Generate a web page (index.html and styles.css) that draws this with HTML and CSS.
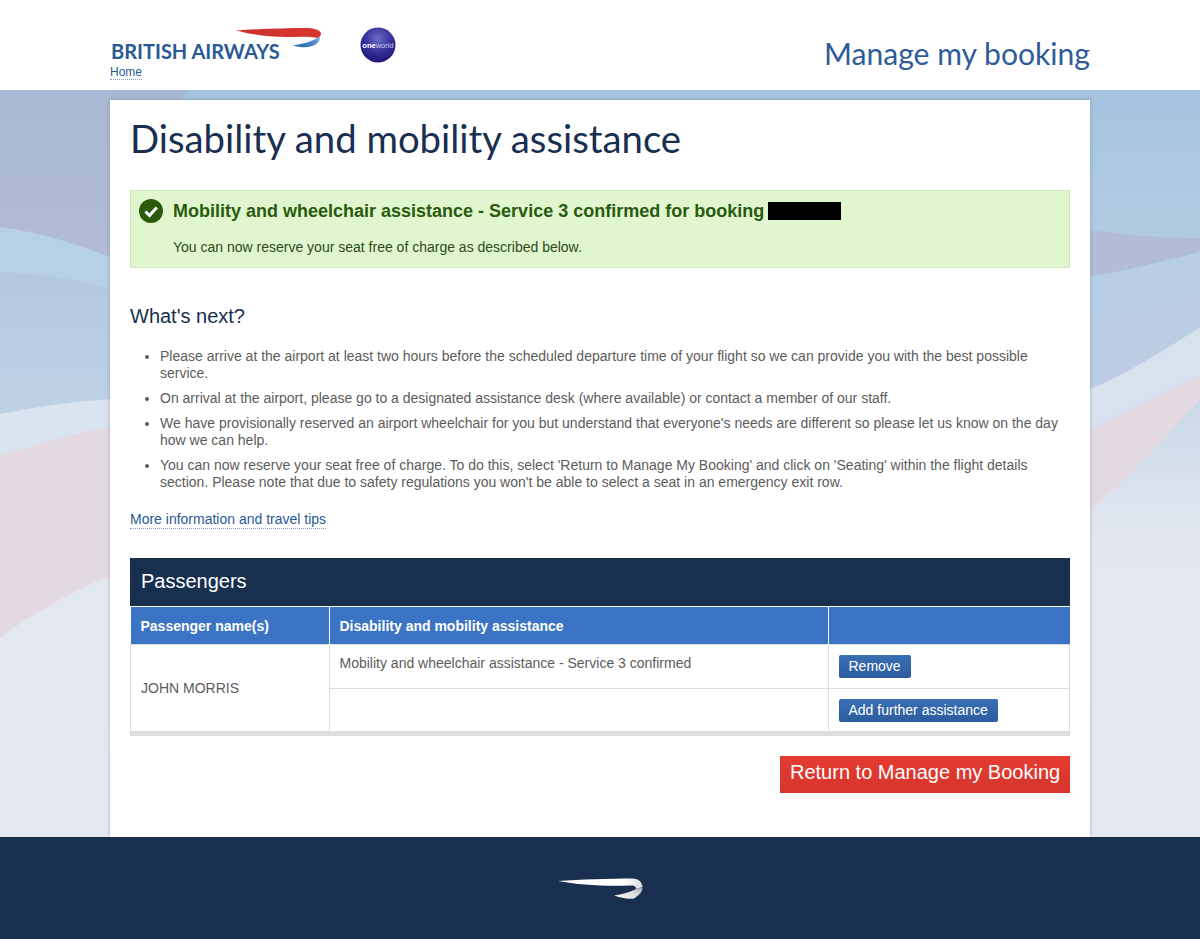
FILE: index.html

```html
<!DOCTYPE html>
<html lang="en">
<head>
  <meta charset="UTF-8" />
  <meta name="viewport" content="width=device-width, initial-scale=1.0"/>
  <title>Disability and mobility assistance</title>
  <link rel="stylesheet" href="styles.css">
</head>
<body>
  <header class="site-header">
    <div class="brand">
      <svg class="ba-logo" width="212" height="36" viewBox="110 26 212 36">
        <defs>
          <linearGradient id="baBlue" x1="0" y1="1" x2="1" y2="0">
            <stop offset="0" stop-color="#1f5fa8"/>
            <stop offset="0.75" stop-color="#5f97d6"/>
            <stop offset="1" stop-color="#a9c6e6"/>
          </linearGradient>
          <linearGradient id="baRed" x1="0" y1="0" x2="1" y2="0">
            <stop offset="0" stop-color="#c9322c"/>
            <stop offset="1" stop-color="#d8382e"/>
          </linearGradient>
        </defs>
        <path d="M236 30.5C258 29 284 28 305 28C314 28 320 30 321 33C321 35 320 37 318 38C309 36 298 37 286 37C268 37 250 34 236 30.5Z" fill="url(#baRed)"/>
        <path d="M293 45.5C303 44 313 41 320 36.5C320.500 40 318 44 312 46C306 48 300 47.500 293 45.5Z" fill="url(#baBlue)"/>
        <text class="ba-word" x="111" y="59">BRITISH AIRWAYS</text>
      </svg>
      <a class="home-link" href="#">Home</a>
    </div>
    <svg class="oneworld" width="36" height="36" viewBox="0 0 36 36">
      <defs>
        <radialGradient id="globe" cx="0.5" cy="0.32" r="0.72">
          <stop offset="0" stop-color="#6a6bc4"/>
          <stop offset="0.55" stop-color="#35309a"/>
          <stop offset="1" stop-color="#1b1470"/>
        </radialGradient>
      </defs>
      <circle cx="18" cy="18" r="17.500" fill="url(#globe)"/>
      <text class="oneworld-text" x="18" y="20.500"><tspan class="oneworld-one">one</tspan>world</text>
    </svg>
    <div class="section-name">Manage my booking</div>
  </header>

  <main class="page-bg">
    <svg class="swooshes" width="1200" height="747" viewBox="0 90 1200 747" preserveAspectRatio="none">
      <defs>
        <linearGradient id="midBlue" x1="0" y1="0" x2="0" y2="1">
          <stop offset="0" stop-color="#b3c8e0"/>
          <stop offset="1" stop-color="#c5d6e7"/>
        </linearGradient>
        <linearGradient id="topPurple" x1="0" y1="0" x2="0" y2="1">
          <stop offset="0" stop-color="#a9b8d2"/>
          <stop offset="1" stop-color="#b3bdd4"/>
        </linearGradient>
      </defs>
      <path d="M0 90H190L180 100C230 130 300 200 340 290H0Z" fill="url(#topPurple)"/>
      <!-- left side bands -->
      <path d="M0 227C40 232 80 245 110 257L300 340V500H0Z" fill="#b6d0e6"/>
      <path d="M0 272C40 273 80 280 110 289L300 340V500H0Z" fill="url(#midBlue)"/>
      <path d="M0 414C40 406 80 401 110 399H300V500H0Z" fill="#d8e4ef"/>
      <path d="M0 456C40 443 80 432 110 427H300V560L110 576C70 592 30 615 0 638Z" fill="#e2d9e1"/>
      <!-- right side bands -->
      <path d="M900 222C960 225 1030 228 1090 230C1130 236 1170 238 1200 238V252C1160 262 1125 272 1090 276H900Z" fill="#b0bdd5"/>
      <path d="M900 276H1090C1125 272 1160 262 1200 252V291C1160 303 1125 314 1090 320H900Z" fill="#b7cee6"/>
      <path d="M900 320H1090C1125 314 1160 303 1200 291V327C1165 350 1125 375 1090 389H900Z" fill="#bacde3"/>
      <path d="M900 389H1090C1125 375 1165 350 1200 327V376C1160 392 1125 415 1090 430H900Z" fill="#d6e2ed"/>
      <path d="M900 430H1090C1125 415 1160 392 1200 376V400C1165 435 1130 480 1090 509H900Z" fill="#e2d9e1"/>
    </svg>

    <section class="card">
      <h1>Disability and mobility assistance</h1>

      <div class="alert">
        <div class="alert-title">
          <svg class="tick" width="24" height="24" viewBox="0 0 24 24">
            <circle cx="12" cy="12" r="12" fill="#2a5a0c"/>
            <path d="M6.500 12.500L10.500 16.500L17.800 8.500" fill="none" stroke="#fff" stroke-width="3"/>
          </svg>
          <span>Mobility and wheelchair assistance - Service 3 confirmed for booking</span>
          <span class="redacted"></span>
        </div>
        <p>You can now reserve your seat free of charge as described below.</p>
      </div>

      <h2>What's next?</h2>
      <ul class="next-list">
        <li>Please arrive at the airport at least two hours before the scheduled departure time of your flight so we can provide you with the best possible service.</li>
        <li>On arrival at the airport, please go to a designated assistance desk (where available) or contact a member of our staff.</li>
        <li>We have provisionally reserved an airport wheelchair for you but understand that everyone's needs are different so please let us know on the day how we can help.</li>
        <li>You can now reserve your seat free of charge. To do this, select 'Return to Manage My Booking' and click on 'Seating' within the flight details section. Please note that due to safety regulations you won't be able to select a seat in an emergency exit row.</li>
      </ul>

      <a class="more-link" href="#">More information and travel tips</a>

      <div class="table-title">Passengers</div>
      <table class="pax-table">
        <thead>
          <tr>
            <th class="col-name">Passenger name(s)</th>
            <th class="col-assist">Disability and mobility assistance</th>
            <th></th>
          </tr>
        </thead>
        <tbody>
          <tr>
            <td rowspan="2" class="pax-name">JOHN MORRIS</td>
            <td class="assist-text">Mobility and wheelchair assistance - Service 3 confirmed</td>
            <td><a class="btn-small" href="#">Remove</a></td>
          </tr>
          <tr>
            <td></td>
            <td class="add-cell"><a class="btn-small" href="#">Add further assistance</a></td>
          </tr>
        </tbody>
      </table>

      <div class="actions">
        <a class="btn-return" href="#">Return to Manage my Booking</a>
      </div>
    </section>
  </main>

  <footer class="site-footer">
    <svg width="86" height="22" viewBox="558 878 86 22">
      <defs>
        <linearGradient id="footSwoosh" x1="0" y1="0" x2="1" y2="0">
          <stop offset="0" stop-color="#fff"/>
          <stop offset="0.8" stop-color="#fff"/>
          <stop offset="1" stop-color="#d5d8dc"/>
        </linearGradient>
        <linearGradient id="footCurl" x1="0" y1="1" x2="1" y2="0">
          <stop offset="0" stop-color="#fff"/>
          <stop offset="0.6" stop-color="#d8dadd"/>
          <stop offset="1" stop-color="#9fa6b0"/>
        </linearGradient>
      </defs>
      <path d="M558 881C580 879.500 610 878.500 632 878.500C639 878.500 642 882 642.500 887L636 889C636 886 634 885.500 630 885.500C606 886.500 578 885 558 881Z" fill="url(#footSwoosh)"/>
      <path d="M614 895.500C622 894.500 630 892 636 889L642.500 887C643 892 638 896 634 898.500C628 899.500 620 897.500 614 895.500Z" fill="url(#footCurl)"/>
    </svg>
  </footer>
</body>
</html>
```

FILE: styles.css

```css
body {
  margin: 0;
  font-family: 'Liberation Sans', Arial, sans-serif;
  font-size: 14px;
  color: #5c5c5c;
  background: #fff;
}
a {
  color: #2a5a96;
  text-decoration: none;
}

/* header */
.site-header {
  width: 980px;
  height: 90px;
  margin: 0 auto;
  display: flex;
  align-items: flex-start;
}
.brand {
  width: 250px;
  padding-top: 26px;
}
.ba-logo {
  display: block;
}
.ba-word {
  font-family: 'Lato', sans-serif;
  font-size: 20px;
  font-weight: 700;
  fill: #2a5a96;
}
.home-link {
  display: inline-block;
  font-size: 12px;
  line-height: 14px;
  margin-top: 3px;
  border-bottom: 1px dotted #7f9cc0;
}
.oneworld {
  margin-top: 27px;
}
.oneworld-text {
  font-family: 'Liberation Sans', sans-serif;
  font-size: 7.500px;
  text-anchor: middle;
  fill: #c9c9ec;
}
.oneworld-one {
  fill: #fff;
  font-weight: 700;
}
.section-name {
  margin-left: auto;
  margin-top: 35px;
  font-family: 'Lato', sans-serif;
  font-size: 30.100px;
  line-height: 36px;
  color: #2e5c99;
}

/* background */
.page-bg {
  position: relative;
  height: 747px;
  overflow: hidden;
  background: linear-gradient(#a5c3df 0, #b9cfe4 30%, #e2e7f0 60%, #e4e9f1 100%);
}
.swooshes {
  position: absolute;
  top: 0;
  left: 0;
}
.card {
  position: relative;
  box-sizing: border-box;
  width: 980px;
  height: 737px;
  margin: 10px auto 0;
  padding: 0 20px;
  background: #fff;
  box-shadow: 0 0 4px rgba(60,70,90,0.3);
}
h1 {
  margin: 0;
  padding-top: 14px;
  font-family: 'Lato', sans-serif;
  font-size: 38.300px;
  line-height: 48px;
  font-weight: 400;
  color: #182f50;
}

/* confirmation box */
.alert {
  box-sizing: border-box;
  height: 78px;
  margin-top: 28px;
  padding: 8px 0 0 8px;
  background: #dff6cf;
  border: 1px solid #cfe6bf;
}
.alert-title {
  display: flex;
  align-items: center;
  font-size: 18px;
  line-height: 24px;
  font-weight: 700;
  color: #2a5a0c;
}
.tick {
  margin-right: 10px;
}
.redacted {
  width: 73px;
  height: 18px;
  margin-left: 4px;
  background: #000;
}
.alert p {
  margin: 16px 0 0 34px;
  line-height: 17px;
  color: #2c4a18;
}

/* what's next */
h2 {
  margin: 36px 0 0;
  font-size: 20px;
  line-height: 24px;
  font-weight: 400;
  color: #182f50;
}
.next-list {
  margin: 20px 0 0;
  padding: 0 0 0 30px;
  line-height: 17px;
}
.next-list li {
  margin-bottom: 8px;
}
.more-link {
  display: inline-block;
  margin-top: 12px;
  line-height: 17px;
  border-bottom: 1px dotted #7f9cc0;
}

/* passengers table */
.table-title {
  height: 48px;
  margin-top: 29px;
  padding-left: 11px;
  font-size: 20px;
  line-height: 47px;
  color: #fff;
  background: #182f50;
}
.pax-table {
  width: 940px;
  table-layout: fixed;
  border-collapse: collapse;
  border-bottom: 5px solid #ddd;
}
.pax-table th {
  height: 37px;
  padding: 0 10px;
  text-align: left;
  font-size: 14px;
  color: #fff;
  background: #3b74c4;
  border-top: 1px solid #fff;
  border-left: 1px solid #fff;
}
.pax-table th:first-child {
  border-left: 0;
}
.col-name {
  width: 178px;
}
.col-assist {
  width: 478px;
}
.pax-table td {
  box-sizing: border-box;
  height: 44px;
  padding: 0 10px;
  border: 1px solid #ddd;
}
.pax-name {
  padding-left: 11px;
}
.pax-table td.assist-text {
  vertical-align: top;
  padding-top: 10px;
  line-height: 17px;
}
.pax-table td.add-cell {
  height: 45px;
  padding-top: 1px;
}
.btn-small {
  display: block;
  width: fit-content;
  padding: 0 10px;
  height: 23px;
  line-height: 22px;
  color: #fff;
  border-radius: 2px;
  background: linear-gradient(#3a6fb5, #2b5c9e);
}
.actions {
  display: flex;
  justify-content: flex-end;
  margin-top: 20px;
}
.btn-return {
  display: block;
  height: 37px;
  width: 290px;
  box-sizing: border-box;
  padding-left: 10px;
  font-size: 20px;
  line-height: 32px;
  color: #fff;
  background: linear-gradient(#e53b32, #d5352c);
}

/* footer */
.site-footer {
  height: 102px;
  box-sizing: border-box;
  padding-top: 41px;
  display: flex;
  justify-content: center;
  align-items: flex-start;
  background: #182f50;
}
.site-footer svg {
  margin-left: 1px;
}
```
